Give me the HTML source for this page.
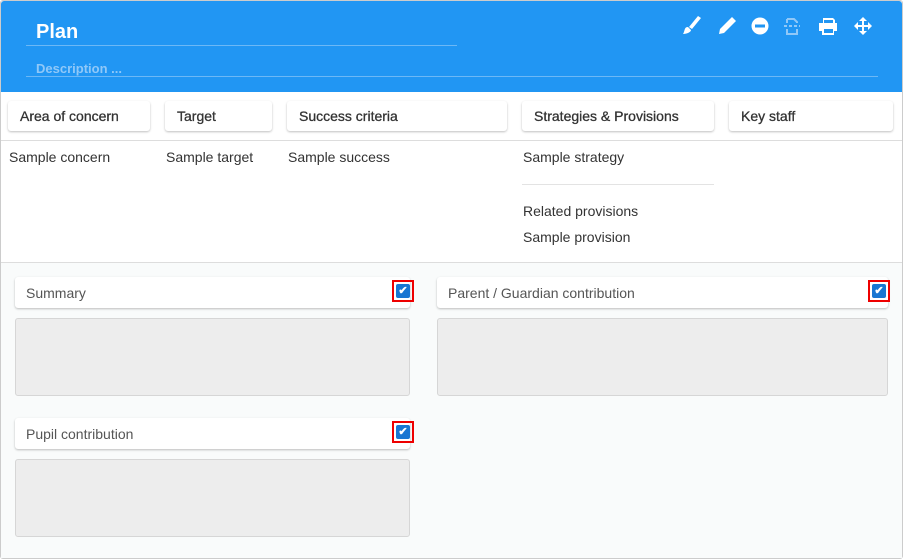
<!DOCTYPE html>
<html><head><style>
*{box-sizing:border-box;margin:0;padding:0}
body{width:903px;height:559px;font-family:"Liberation Sans",sans-serif;background:#fff;position:relative;overflow:hidden;color:#333}
.abs{position:absolute}
.hdr{left:1px;top:1px;width:901px;height:91px;background:#2196f3;border-radius:3px 3px 0 0}
.card{position:absolute;top:101px;height:30px;background:#fff;border-radius:3px;box-shadow:0 1px 2px rgba(0,0,0,.25);font-size:14px;padding:7px 12px;color:#333;-webkit-text-stroke:0.3px #333}
.t{position:absolute;font-size:14px;color:#333}
.lab{position:absolute;height:31px;background:#fff;border-radius:3px;box-shadow:0 1px 2px rgba(0,0,0,.25);font-size:14px;color:#555;padding:8px 11px}
.ta{position:absolute;background:#ededed;border:1px solid #d6d6d6;border-radius:3px}
.cb{position:absolute;width:22px;height:22px;border:2px solid #e00;padding:2px}
.cb div{width:14px;height:14px;background:#1976d2;border-radius:2px;color:#fff;font-size:11px;line-height:14px;text-align:center;font-weight:bold}
</style></head><body>
<div class="abs" style="left:0;top:0;width:903px;height:559px;border:1px solid #ccc;border-radius:3px"></div>
<div class="abs hdr"></div>
<div class="abs" style="left:36px;top:21px;font-size:20px;font-weight:bold;color:#fff">Plan</div>
<div class="abs" style="left:26px;top:45px;width:431px;height:1px;background:#6cb8f6"></div>
<div class="abs" style="left:36px;top:61px;font-size:13px;font-weight:bold;color:#90c8f8">Description ...</div>
<div class="abs" style="left:26px;top:76px;width:852px;height:1px;background:#6cb8f6"></div>
<svg class="abs" style="left:680px;top:15px" width="200" height="24" viewBox="0 0 200 24" fill="#fff">
<path d="M18 1 L21 3 L12 14 L9 12 Z"/><path d="M8 12 C4 12 5 16 3 19 C7 19 11 17 11 15 Z"/>
<path d="M52 2 L56 6 L44 18 L39 19 L40 14 Z"/>
<circle cx="80" cy="11" r="8.5"/><rect x="75" y="9.5" width="10" height="3" fill="#2196f3"/>
<g fill="none" stroke="#90c8f8" stroke-width="2"><path d="M107 4 h7 l3 3 v1 M107 14 v5 h10 v-5 M107 4 v4"/><path d="M104 11 h16" stroke-dasharray="3 2"/></g>
<path d="M143 3 h10 l2 2 v3 h2 v8 h-3 v4 h-12 v-4 h-3 v-8 h4 z M144 5 v3 h9 v-3 z M144 14 v4 h9 v-4 z"/>
<path d="M183 2 l4 4 h-3 v4 h4 v-3 l4 4 l-4 4 v-3 h-4 v4 h3 l-4 4 l-4 -4 h3 v-4 h-4 v3 l-4 -4 l4 -4 v3 h4 v-4 h-3 z"/>
</svg>
<div class="card" style="left:8px;width:142px">Area of concern</div>
<div class="card" style="left:165px;width:107px">Target</div>
<div class="card" style="left:287px;width:220px">Success criteria</div>
<div class="card" style="left:522px;width:192px">Strategies &amp; Provisions</div>
<div class="card" style="left:729px;width:164px">Key staff</div>
<div class="abs" style="left:1px;top:140px;width:901px;height:1px;background:#ddd"></div>
<div class="t" style="left:9px;top:149px">Sample concern</div>
<div class="t" style="left:166px;top:149px">Sample target</div>
<div class="t" style="left:288px;top:149px">Sample success</div>
<div class="t" style="left:523px;top:149px">Sample strategy</div>
<div class="abs" style="left:522px;top:184px;width:192px;height:1px;background:#e3e3e3"></div>
<div class="t" style="left:523px;top:203px">Related provisions</div>
<div class="t" style="left:523px;top:229px">Sample provision</div>
<div class="abs" style="left:1px;top:262px;width:901px;height:296px;background:#f9fbfb;border-top:1px solid #ddd"></div>
<div class="lab" style="left:15px;top:277px;width:395px">Summary</div>
<div class="lab" style="left:437px;top:277px;width:451px">Parent / Guardian contribution</div>
<div class="lab" style="left:15px;top:418px;width:395px">Pupil contribution</div>
<div class="cb" style="left:392px;top:280px"><div>✔</div></div>
<div class="cb" style="left:868px;top:280px"><div>✔</div></div>
<div class="cb" style="left:392px;top:421px"><div>✔</div></div>
<div class="ta" style="left:15px;top:318px;width:395px;height:78px"></div>
<div class="ta" style="left:437px;top:318px;width:451px;height:78px"></div>
<div class="ta" style="left:15px;top:459px;width:395px;height:78px"></div>
</body></html>
